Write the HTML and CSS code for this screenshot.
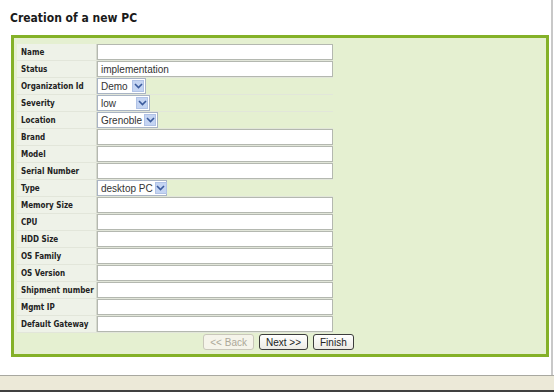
FILE: index.html
```html
<!DOCTYPE html>
<html lang="en">
<head>
    <meta charset="UTF-8">
    <title>Creation of a new PC</title>
    <link rel="stylesheet" href="styles.css">
</head>
<body>

    <div class="page">
        <h1 class="title">Creation of a new PC</h1>

        <div class="wizard">
            <table class="form">
                <tr><td class="lbl">Name</td><td><input type="text" class="txt"></td></tr>
                <tr><td class="lbl">Status</td><td><input type="text" class="txt" value="implementation"></td></tr>
                <tr><td class="lbl">Organization Id</td><td><span class="sel w-demo">Demo<span class="arrow"><svg width="9" height="6" viewBox="0 0 9 6"><path d="M1 1 L4.5 4.5 L8 1" fill="none" stroke="#3a5a9c" stroke-width="1.6"/></svg></span></span></td></tr>
                <tr><td class="lbl">Severity</td><td><span class="sel w-low">low<span class="arrow"><svg width="9" height="6" viewBox="0 0 9 6"><path d="M1 1 L4.5 4.5 L8 1" fill="none" stroke="#3a5a9c" stroke-width="1.6"/></svg></span></span></td></tr>
                <tr><td class="lbl">Location</td><td><span class="sel w-loc">Grenoble<span class="arrow"><svg width="9" height="6" viewBox="0 0 9 6"><path d="M1 1 L4.5 4.5 L8 1" fill="none" stroke="#3a5a9c" stroke-width="1.6"/></svg></span></span></td></tr>
                <tr><td class="lbl">Brand</td><td><input type="text" class="txt"></td></tr>
                <tr><td class="lbl">Model</td><td><input type="text" class="txt"></td></tr>
                <tr><td class="lbl">Serial Number</td><td><input type="text" class="txt"></td></tr>
                <tr><td class="lbl">Type</td><td><span class="sel w-type">desktop PC<span class="arrow"><svg width="9" height="6" viewBox="0 0 9 6"><path d="M1 1 L4.5 4.5 L8 1" fill="none" stroke="#3a5a9c" stroke-width="1.6"/></svg></span></span></td></tr>
                <tr><td class="lbl">Memory Size</td><td><input type="text" class="txt"></td></tr>
                <tr><td class="lbl">CPU</td><td><input type="text" class="txt"></td></tr>
                <tr><td class="lbl">HDD Size</td><td><input type="text" class="txt"></td></tr>
                <tr><td class="lbl">OS Family</td><td><input type="text" class="txt"></td></tr>
                <tr><td class="lbl">OS Version</td><td><input type="text" class="txt"></td></tr>
                <tr><td class="lbl">Shipment number</td><td><input type="text" class="txt"></td></tr>
                <tr><td class="lbl">Mgmt IP</td><td><input type="text" class="txt"></td></tr>
                <tr><td class="lbl">Default Gateway</td><td><input type="text" class="txt"></td></tr>
            </table>

            <div class="actions">
                <button class="btn" disabled>&lt;&lt; Back</button>
                <button class="btn">Next &gt;&gt;</button>
                <button class="btn">Finish</button>
            </div>
        </div>
    </div>

    <div class="statusbar"></div>

</body>
</html>
```

FILE: styles.css
```css
/* General Styling */
html, body {
    margin: 0;
    padding: 0;
}

body {
    width: 554px;
    height: 392px;
    background: #ffffff;
    font-family: "DejaVu Sans Condensed", "DejaVu Sans", Verdana, sans-serif;
    overflow: hidden;
}

.page {
    height: 375px;
    box-sizing: border-box;
    border-right: 2px solid #c8c8c8;
    margin-right: 1px;
    padding-top: 10px;
}

.title {
    margin: 0 0 9px 10px;
    height: 16px;
    font-size: 12px;
    font-weight: bold;
    color: #1a1a1a;
    line-height: 16px;
}

/* Wizard box */
.wizard {
    width: 538px;
    height: 322px;
    box-sizing: border-box;
    margin-left: 11px;
    border: 3px solid #84b128;
    background: #e5f0d1;
    padding: 6px 0 0 3px;
}

.form {
    border-collapse: collapse;
}

.form td {
    height: 16px;
    padding: 0;
    border-bottom: 1px solid #e2e6da;
}

.lbl {
    width: 75px;
    padding-left: 4px !important;
    background: #eef2e8;
    font-size: 8px;
    font-weight: bold;
    color: #222;
    white-space: nowrap;
    border-right: 1px solid #d6dace;
}

.txt {
    display: block;
    box-sizing: border-box;
    width: 236px;
    height: 16px;
    margin: 0;
    padding: 0 3px;
    border: 1px solid #b4b8b0;
    background: #fff;
    font-family: "Liberation Sans", Arial, sans-serif;
    font-size: 10px;
    color: #333;
}

.sel {
    display: flex;
    align-items: center;
    justify-content: space-between;
    box-sizing: border-box;
    height: 16px;
    padding: 0 1px 0 3px;
    border: 1px solid #a9b4c4;
    background: #fff;
    font-family: "Liberation Sans", Arial, sans-serif;
    font-size: 10px;
    color: #333;
    white-space: nowrap;
}

.w-demo { width: 49px; }
.w-low { width: 53px; }
.w-loc { width: 61px; }
.w-type { width: 70px; }

.arrow {
    display: flex;
    flex-shrink: 0;
    align-items: center;
    justify-content: center;
    width: 12px;
    height: 12px;
    margin-left: 2px;
    background: #c4d4f2;
    border: 1px solid #b0c2e6;
    box-sizing: border-box;
}

/* Buttons */
.actions {
    display: flex;
    justify-content: center;
    gap: 5px;
    margin-top: 1px;
    padding-right: 6px;
}

.btn {
    height: 16px;
    padding: 0 6px;
    border: 1px solid #3c3c3c;
    border-radius: 3px;
    background: linear-gradient(#ffffff, #eceae4);
    font-family: "Liberation Sans", Arial, sans-serif;
    font-size: 10px;
    color: #222;
}

.btn:disabled {
    border-color: #c9c7ba;
    color: #aca899;
    background: #f5f4ea;
}

/* Status bar */
.statusbar {
    height: 17px;
    box-sizing: border-box;
    border-top: 1px solid #a8a8a0;
    border-bottom: 2px solid #404040;
    background: #ece9d8;
}
```
